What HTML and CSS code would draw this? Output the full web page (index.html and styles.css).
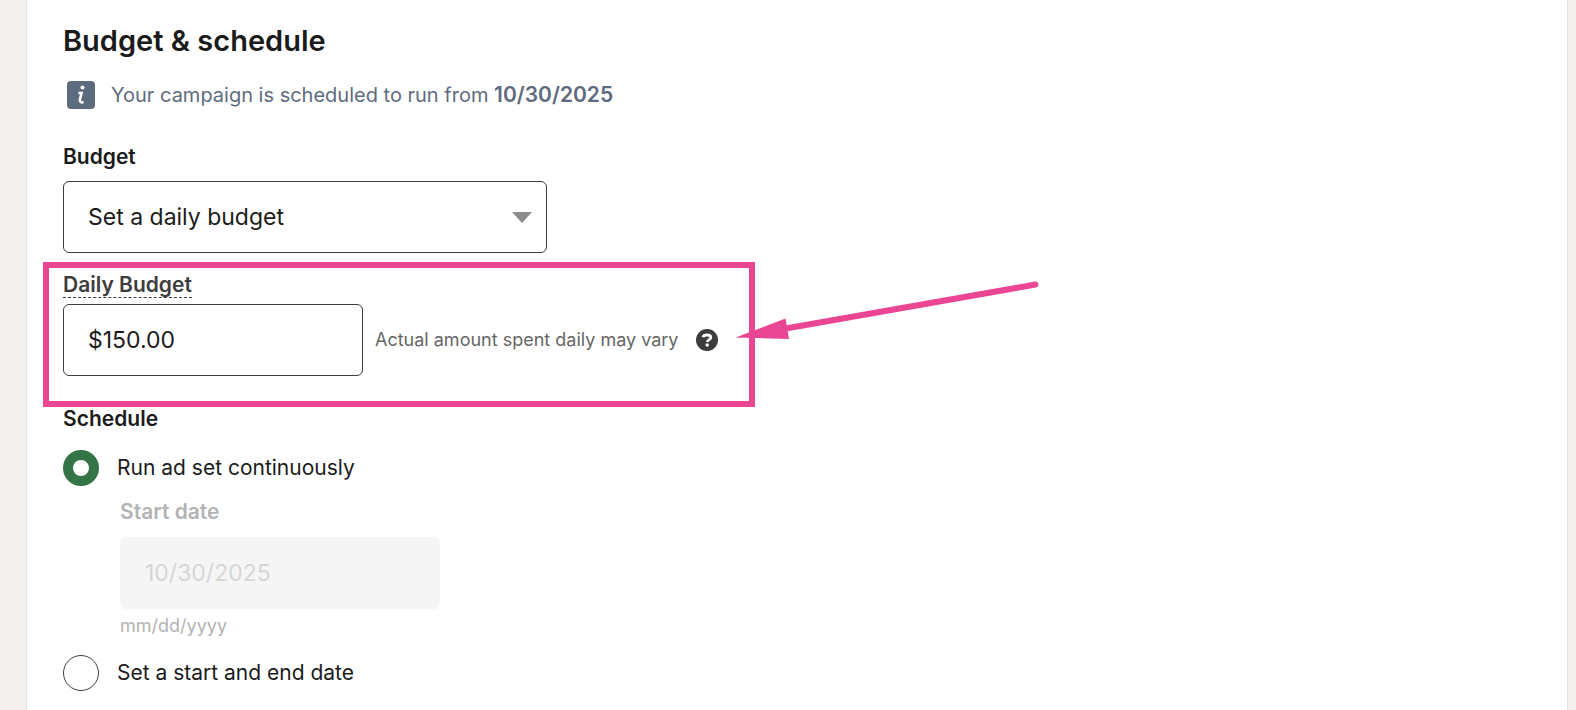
FILE: index.html
```html
<!DOCTYPE html>
<html lang="en">
<head>
  <meta charset="UTF-8">
  <meta name="viewport" content="width=device-width, initial-scale=1.0">
  <title>Budget &amp; schedule</title>
  <link rel="stylesheet" href="styles.css">
</head>
<body>

  <form class="card">
    <h2 class="title">Budget &amp; schedule</h2>

    <div class="notice">
      <svg class="notice-icon" viewBox="0 0 28 28" aria-hidden="true">
        <rect width="28" height="28" rx="4" fill="#5e6b7e"/>
        <circle cx="15.5" cy="6.5" r="2" fill="#fff"/>
        <path d="M11.5 12H14.6L12.9 18.500C12.400 20.800 13.400 21.500 16.500 21.400" fill="none" stroke="#fff" stroke-width="2.6"/>
      </svg>
      <p>Your campaign is scheduled to run from <strong>10/30/2025</strong></p>
    </div>

    <!-- Budget -->
    <label class="label budget-label" for="budgetType">Budget</label>
    <div class="select-wrap">
      <select id="budgetType" class="field">
        <option>Set a daily budget</option>
      </select>
    </div>

    <div class="callout">
      <label class="daily-label" for="dailyBudget">Daily Budget</label>
      <div class="amount-row">
        <input id="dailyBudget" class="field amount" type="text" value="$150.00">
        <span class="hint">Actual amount spent daily may vary</span>
        <button type="button" class="help" aria-label="Help">
          <svg viewBox="0 0 22 22" aria-hidden="true">
            <circle cx="11" cy="11" r="11" fill="#3d3d3d"/>
            <path d="M7 8.3C7.4 6.4 9 6 11 6C13.4 6 14.8 7 14.8 8.5C14.8 10.8 11.4 10.4 11.4 13" fill="none" stroke="#fff" stroke-width="2.8"/>
            <circle cx="11.2" cy="16" r="1.7" fill="#fff"/>
          </svg>
        </button>
      </div>
      <svg class="arrow" viewBox="0 0 320 80" aria-hidden="true">
        <path d="M50 59.5L305.5 14.5" stroke="#eb4693" stroke-width="6" stroke-linecap="round"/>
        <path d="M5.5 67.5L55.5 48.5L59 69Z" fill="#eb4693"/>
      </svg>
    </div>

    <!-- Schedule -->
    <fieldset class="schedule">
      <legend class="label">Schedule</legend>
      <label class="option"><input type="radio" name="schedule" checked> Run ad set continuously</label>
      <div class="start">
        <label class="label" for="startDate">Start date</label>
        <input id="startDate" class="field date" type="text" value="10/30/2025" disabled>
        <span class="hint">mm/dd/yyyy</span>
      </div>
      <label class="option"><input type="radio" name="schedule"> Set a start and end date</label>
    </fieldset>
  </form>

</body>
</html>
```
FILE: styles.css
```css
* {
  box-sizing: border-box;
}
body {
  margin: 0;
  padding: 0 8px 0 26px;
  background-color: #f3f1ef;
  color: #1b1b1b;
  font-family: Inter, "Liberation Sans", sans-serif;
  font-size: 21px;
  line-height: 24px;
}
.card {
  min-height: 100vh;
  padding: 21px 36px 19px;
  border: 1px solid #e6e4e2;
  border-width: 0 1px;
  background-color: #fff;
}
.title {
  margin: 0;
  font-size: 29px;
  font-weight: 600;
  line-height: 40px;
}

/* Info line */
.notice {
  display: flex;
  align-items: center;
  gap: 16px;
  margin-top: 20px;
  padding-left: 4px;
  color: #5e6b7e;
  font-size: 20px;
}
.notice-icon {
  width: 28px;
  height: 28px;
}
.notice p {
  margin: 0;
}
.notice strong {
  font-size: 21px;
  font-weight: 600;
}

/* Fields */
.label {
  display: block;
  padding: 0;
  font-weight: 600;
}
.budget-label {
  margin: 36px 0 12px;
}
.field {
  display: block;
  width: 100%;
  height: 72px;
  padding: 0 24px;
  border: 1px solid #3d3d3d;
  border-radius: 6px;
  background-color: #fff;
  color: #1b1b1b;
  font-family: inherit;
  font-size: 23px;
  appearance: none;
}
.select-wrap {
  position: relative;
  max-width: 484px;
}
.select-wrap::after {
  content: "";
  position: absolute;
  top: 31px;
  right: 15px;
  border: 10px solid transparent;
  border-top: 11px solid #8c8c8c;
  border-bottom: 0;
  pointer-events: none;
}

/* Highlighted daily budget */
.callout {
  position: relative;
  width: 712px;
  margin: 9px 0 0 -20px;
  padding: 4px 14px 25px;
  border: 6px solid #eb4693;
}
.daily-label {
  display: block;
  width: fit-content;
  margin-bottom: 6px;
  border-bottom: 1px dashed #3d3d3d;
  color: #3d3d3d;
  font-weight: 600;
  line-height: 25px;
}
.amount-row {
  display: flex;
  align-items: center;
}
.amount {
  width: 300px;
}
.hint {
  font-size: 18px;
  color: #666;
}
.amount-row .hint {
  margin: 0 18px 0 12px;
}
.help {
  width: 22px;
  height: 22px;
  padding: 0;
  border: 0;
  background: none;
}
.help svg {
  display: block;
}
.arrow {
  position: absolute;
  top: 2px;
  left: 681px;
  width: 320px;
  height: 80px;
  pointer-events: none;
}

/* Schedule */
.schedule {
  margin: 0;
  padding: 0;
  border: 0;
}
.schedule legend {
  margin-bottom: 19px;
}
.option {
  display: flex;
  align-items: center;
  gap: 18px;
}
.option input {
  width: 36px;
  height: 36px;
  margin: 0;
  border: 1px solid #3d3d3d;
  border-radius: 50%;
  background-color: #fff;
  appearance: none;
}
.option input:checked {
  border: 10px solid #337547;
}
.start {
  margin: 14px 0 17px 57px;
  color: #b3b3b3;
}
.start .label {
  margin-bottom: 13px;
}
.date {
  max-width: 320px;
  margin-bottom: 5px;
  border-color: #f5f5f5;
  background-color: #f5f5f5;
  color: #d6d6d6;
}
.start .hint {
  display: block;
  color: #b3b3b3;
}
```
